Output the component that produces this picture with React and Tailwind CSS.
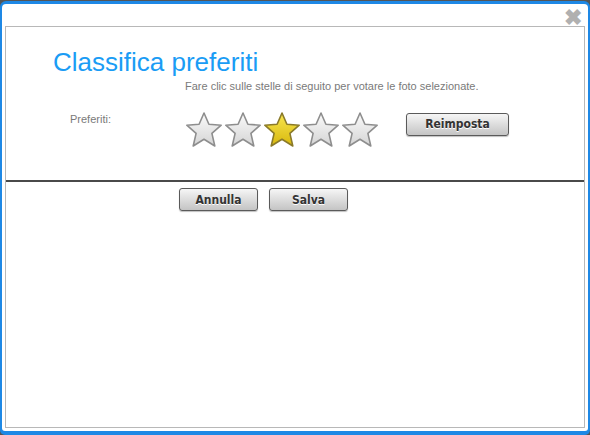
import React from 'react';

const Star = ({ on, id }) => (
  <svg width="38" height="37" viewBox="0 0 38 37" className="block">
    <defs>
      <linearGradient id={`g-${id}`} x1="0" y1="0" x2="0" y2="1">
        {on ? (
          <>
            <stop offset="0" stopColor="#f8e650" />
            <stop offset="1" stopColor="#d8b80c" />
          </>
        ) : (
          <>
            <stop offset="0" stopColor="#fbfbfb" />
            <stop offset="1" stopColor="#d4d4d4" />
          </>
        )}
      </linearGradient>
    </defs>
    <path
      d="M19 2 L23.9 13.2 L36.2 14.2 L26.9 22.4 L29.8 35 L19 28.3 L8.2 35 L11.1 22.4 L1.8 14.2 L14.1 13.2 Z"
      fill={`url(#g-${id})`}
      stroke={on ? '#8a7a2a' : '#8e8e8e'}
      strokeWidth="1.6"
      strokeLinejoin="round"
    />
  </svg>
);

const Btn = ({ children, w }) => (
  <button
    type="button"
    className={`${w} h-[23px] rounded-[3px] border border-[#5a5a5a] bg-gradient-to-b from-[#f6f6f6] to-[#c4c4c4] text-[12px] font-bold text-[#333] [text-shadow:0_1px_0_#fff] shadow-[0_1px_1px_rgba(0,0,0,0.25)]`}
    style={{ fontFamily: '"DejaVu Sans Condensed", "Liberation Sans", sans-serif' }}
  >
    {children}
  </button>
);

export default function App() {
  return (
    <div className="w-[590px] h-[435px] bg-[#555] overflow-hidden" style={{ fontFamily: '"Liberation Sans", Arial, sans-serif' }}>
      <div className="w-full h-full pt-px">
        <div className="w-full h-full rounded-t-[6px] rounded-b-[5px] bg-[#1e88e5] pt-[3px] px-[2px] pb-[4px]">
          <div className="relative w-full h-full bg-white rounded-t-[4px] rounded-b-[3px] px-[3px] pt-[22px] pb-[3px]">
            <span className="absolute right-[6px] top-[3px] text-[22px] leading-none font-bold text-[#b0b0b0]">✖</span>
            <div className="w-full h-full border border-[#b8b8b8] flex flex-col">
              <div className="h-[153px] flex flex-col">
                <h1 className="mt-[20px] ml-[47px] text-[26px] leading-[30px] text-[#1a9cf5]">Classifica preferiti</h1>
                <p className="ml-[179px] mt-[3px] text-[11px] leading-[13px] text-[#7a7a7a]">
                  Fare clic sulle stelle di seguito per votare le foto selezionate.
                </p>
                <div className="flex items-start mt-[18px]">
                  <span className="ml-[64px] mt-0 w-[115px] text-[11px] text-[#7a7a7a]">Preferiti:</span>
                  <div className="flex gap-px">
                    {[0, 1, 2, 3, 4].map((i) => (
                      <Star key={i} id={i} on={i === 2} />
                    ))}
                  </div>
                  <div className="ml-[27px] mt-0">
                    <Btn w="w-[103px]">Reimposta</Btn>
                  </div>
                </div>
              </div>
              <div className="h-[2px] bg-[#4a4a4a]" />
              <div className="flex gap-[11px] ml-[173px] mt-[6px]">
                <Btn w="w-[79px]">Annulla</Btn>
                <Btn w="w-[79px]">Salva</Btn>
              </div>
            </div>
          </div>
        </div>
      </div>
    </div>
  );
}
